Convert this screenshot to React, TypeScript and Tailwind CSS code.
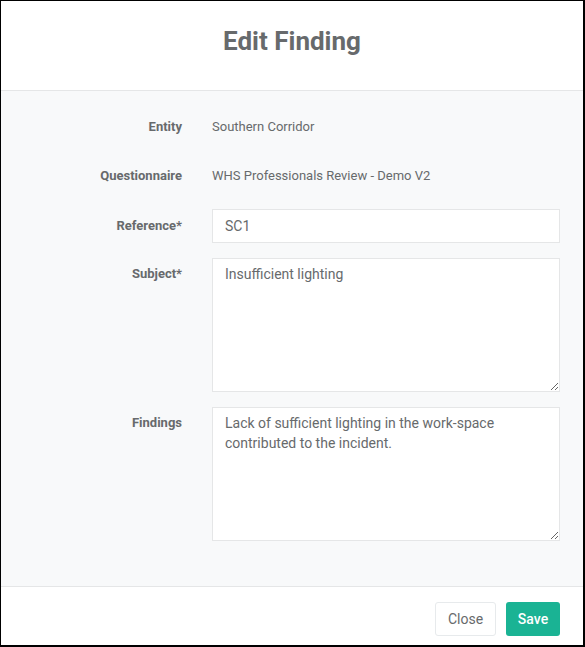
import * as React from "react";

export default function App() {
  const [form, setForm] = React.useState({
    reference: "SC1",
    subject: "Insufficient lighting",
    findings: "Lack of sufficient lighting in the work-space contributed to the incident.",
  });

  const labelCls =
    "w-[181px] shrink-0 text-right text-[13px] font-bold text-[#676a6c]";
  const fieldCls =
    "block w-full border border-[#e5e6e7] bg-white px-3 text-[14px] text-[#676a6c] outline-none";

  return (
    <div
      className="flex h-[647px] w-[585px] flex-col border-t border-l border-r-2 border-b-2 border-black bg-white text-[#676a6c]"
      style={{ fontFamily: "Roboto, 'Open Sans', sans-serif" }}
    >
      {/* header */}
      <div className="flex h-[90px] shrink-0 items-center justify-center border-b border-[#e5e6e7] pb-[9px]">
        <h1 className="text-[26px] font-bold text-[#676a6c]">Edit Finding</h1>
      </div>

      {/* body */}
      <div className="flex-1 bg-[#f8f9fa] pt-[19px] pr-[23px]">
        <div className="flex h-[34px] items-center gap-[30px]">
          <div className={labelCls}>Entity</div>
          <div className="text-[13px]">Southern Corridor</div>
        </div>

        <div className="mt-[15px] flex h-[34px] items-center gap-[30px]">
          <div className={labelCls}>Questionnaire</div>
          <div className="text-[13px]">WHS Professionals Review - Demo V2</div>
        </div>

        <div className="mt-[16px] flex items-center gap-[30px]">
          <div className={labelCls}>Reference*</div>
          <input
            className={fieldCls + " h-[34px]"}
            value={form.reference}
            onChange={(e) => setForm((f) => ({ ...f, reference: e.target.value }))}
          />
        </div>

        <div className="mt-[15px] flex items-start gap-[30px]">
          <div className={labelCls + " pt-[6px]"}>Subject*</div>
          <textarea
            className={fieldCls + " h-[134px] py-[5px] leading-5"}
            value={form.subject}
            onChange={(e) => setForm((f) => ({ ...f, subject: e.target.value }))}
          />
        </div>

        <div className="mt-[15px] flex items-start gap-[30px]">
          <div className={labelCls + " pt-[6px]"}>Findings</div>
          <textarea
            className={fieldCls + " h-[134px] py-[5px] leading-5"}
            value={form.findings}
            onChange={(e) => setForm((f) => ({ ...f, findings: e.target.value }))}
          />
        </div>
      </div>

      {/* footer */}
      <div className="flex h-[59px] shrink-0 items-start justify-end gap-[10px] border-t border-[#e5e6e7] pt-[15px] pr-[23px]">
        <button
          type="button"
          className="h-[34px] w-[61px] rounded-[3px] border border-[#e7eaec] bg-white text-[14px] text-[#676a6c]"
        >
          Close
        </button>
        <button
          type="button"
          className="h-[34px] w-[54px] rounded-[3px] bg-[#1ab394] text-[14px] font-medium text-white"
        >
          Save
        </button>
      </div>
    </div>
  );
}
